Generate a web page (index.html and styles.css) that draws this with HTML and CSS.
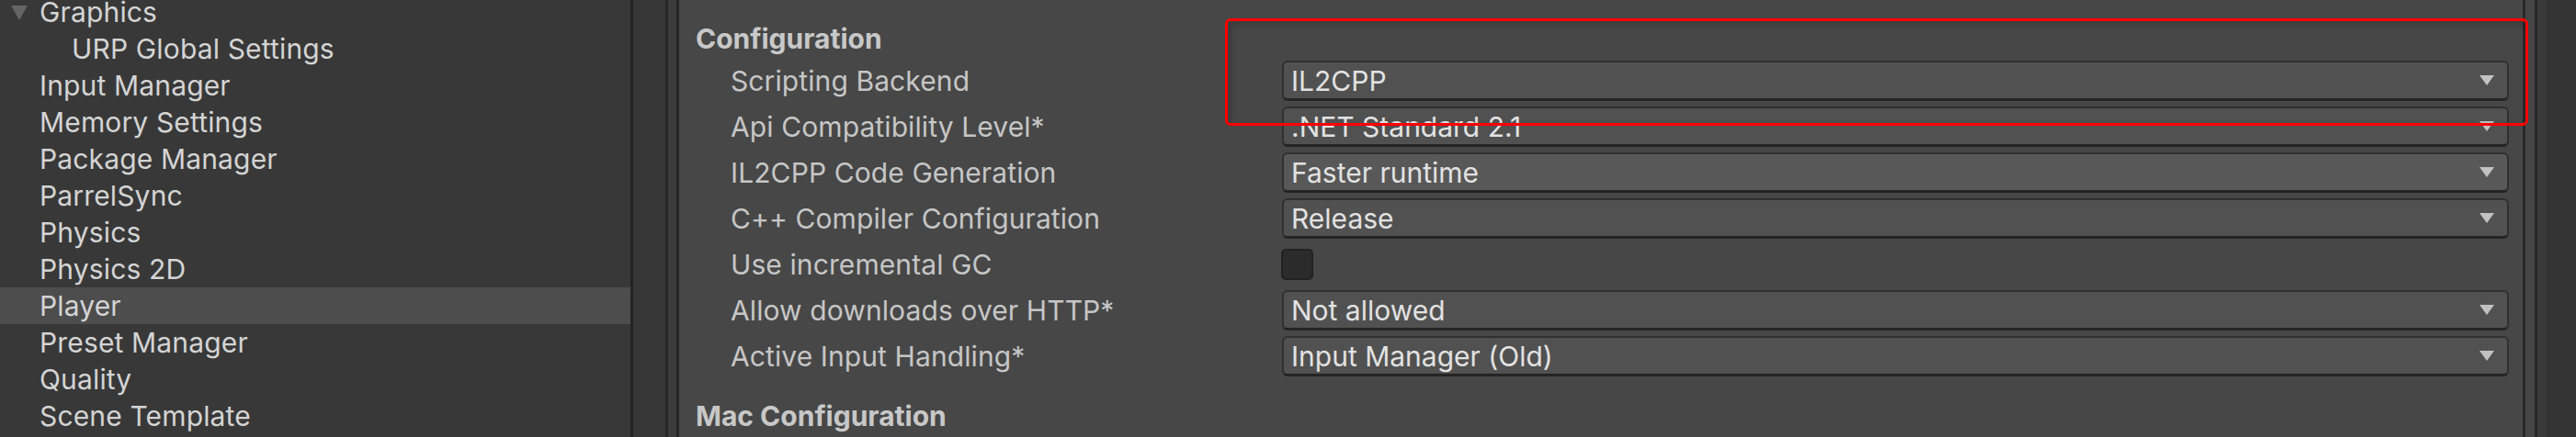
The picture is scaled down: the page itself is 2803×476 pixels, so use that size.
FILE: index.html
```html
<!DOCTYPE html>
<html>
<head>
<meta charset="utf-8">
<link rel="stylesheet" href="styles.css">
</head>
<body>
<div class="window">
  <div class="sidebar">
    <ul class="tree">
      <li class="item first"><svg class="fold" viewBox="0 0 20 18" width="20" height="18"><polygon points="1,1 19,1 10,17" fill="#656565"/></svg>Graphics</li>
      <li class="item child">URP Global Settings</li>
      <li class="item">Input Manager</li>
      <li class="item">Memory Settings</li>
      <li class="item">Package Manager</li>
      <li class="item">ParrelSync</li>
      <li class="item">Physics</li>
      <li class="item">Physics 2D</li>
      <li class="item selected">Player</li>
      <li class="item">Preset Manager</li>
      <li class="item">Quality</li>
      <li class="item">Scene Template</li>
    </ul>
  </div>
  <div class="gutter"></div>
  <div class="gutter2"></div>
  <div class="main">
    <div class="header">Configuration</div>
    <div class="row"><div class="label">Scripting Backend</div><div class="popup"><span>IL2CPP</span><svg class="arrow" viewBox="0 0 16 11" width="16" height="11"><polygon points="0,0 16,0 8,11" fill="#c2c2c2"/></svg></div></div>
    <div class="row"><div class="label">Api Compatibility Level*</div><div class="popup"><span>.NET Standard 2.1</span><svg class="arrow" viewBox="0 0 16 11" width="16" height="11"><polygon points="0,0 16,0 8,11" fill="#c2c2c2"/></svg></div></div>
    <div class="row"><div class="label">IL2CPP Code Generation</div><div class="popup hover"><span>Faster runtime</span><svg class="arrow" viewBox="0 0 16 11" width="16" height="11"><polygon points="0,0 16,0 8,11" fill="#c2c2c2"/></svg></div></div>
    <div class="row"><div class="label">C++ Compiler Configuration</div><div class="popup"><span>Release</span><svg class="arrow" viewBox="0 0 16 11" width="16" height="11"><polygon points="0,0 16,0 8,11" fill="#c2c2c2"/></svg></div></div>
    <div class="row"><div class="label">Use incremental GC</div><div class="checkbox"></div></div>
    <div class="row"><div class="label">Allow downloads over HTTP*</div><div class="popup"><span>Not allowed</span><svg class="arrow" viewBox="0 0 16 11" width="16" height="11"><polygon points="0,0 16,0 8,11" fill="#c2c2c2"/></svg></div></div>
    <div class="row"><div class="label">Active Input Handling*</div><div class="popup"><span>Input Manager (Old)</span><svg class="arrow" viewBox="0 0 16 11" width="16" height="11"><polygon points="0,0 16,0 8,11" fill="#c2c2c2"/></svg></div></div>
    <div class="spacer"></div>
    <div class="header">Mac Configuration</div>
  </div>
  <div class="rstrip1"></div>
  <div class="rstrip2"></div>
  <div class="rstrip3"></div>
  <div class="annotation"></div>
</div>
</body>
</html>
```
FILE: styles.css
```css
html, body {
  margin: 0;
  padding: 0;
  background: #383838;
}
body {
  font-family: Inter, "Noto Sans", sans-serif;
  font-size: 30px;
  overflow: hidden;
}
.window {
  position: relative;
  display: flex;
  height: 476px;
  overflow: hidden;
}
.sidebar {
  width: 686px;
  flex: none;
  background: #383838;
  border-right: 3px solid #232323;
  overflow: hidden;
}
.tree {
  list-style: none;
  margin: 0;
  padding: 0;
}
.item {
  height: 40px;
  line-height: 40px;
  padding-left: 43px;
  color: #d4d4d4;
  letter-spacing: 0.15px;
  white-space: nowrap;
  position: relative;
}
.item.first {
  height: 33px;
  line-height: 26px;
}
.item.child {
  padding-left: 78px;
}
.item.selected {
  background: #4d4d4d;
}
.fold {
  position: absolute;
  left: 11px;
  top: 5px;
}
.gutter {
  width: 35px;
  flex: none;
  background: #373737;
  border-right: 3px solid #262626;
}
.gutter2 {
  width: 9px;
  flex: none;
  background: #3c3c3c;
  border-right: 3px solid #262626;
}
.main {
  flex: 1;
  min-width: 0;
  background: #474747;
  border-right: 3px solid #282828;
  padding: 21px 15px 0 18px;
  display: flex;
  flex-direction: column;
}
.header {
  height: 42px;
  line-height: 42px;
  font-weight: 700;
  color: #c8c8c8;
  flex: none;
}
.spacer {
  height: 19px;
  flex: none;
}
.row {
  height: 50px;
  flex: none;
  display: flex;
  align-items: center;
  padding-left: 38px;
}
.label {
  width: 600px;
  flex: none;
  color: #c6c6c6;
  letter-spacing: 0.1px;
  white-space: nowrap;
}
.popup {
  flex: 1;
  height: 44px;
  box-sizing: border-box;
  background: #515151;
  border: 2px solid #303030;
  border-bottom: 3px solid #242424;
  border-radius: 6px;
  display: flex;
  align-items: center;
  justify-content: space-between;
  padding: 0 14px 0 8px;
  color: #e2e2e2;
  white-space: nowrap;
}
.popup.hover {
  background: #585858;
}
.popup span {
  line-height: 36px;
}
.arrow {
  flex: none;
  filter: blur(0.4px);
}
.checkbox {
  width: 35px;
  height: 34px;
  box-sizing: border-box;
  background: #2b2b2b;
  border: 2px solid #222222;
  border-radius: 5px;
  margin-left: -1px;
}
.rstrip1 {
  width: 10px;
  flex: none;
  background: #464646;
  border-right: 3px solid #282828;
}
.rstrip2 {
  width: 9px;
  flex: none;
  background: #3a3a3a;
}
.rstrip3 {
  width: 33px;
  flex: none;
  background: #333333;
}
.annotation {
  position: absolute;
  left: 1333px;
  top: 20px;
  width: 1418px;
  height: 117px;
  box-sizing: border-box;
  border: 3px solid #ff0000;
  border-radius: 6px;
  box-shadow: inset 3px 4px 8px rgba(0, 0, 0, 0.18);
  pointer-events: none;
}
```
